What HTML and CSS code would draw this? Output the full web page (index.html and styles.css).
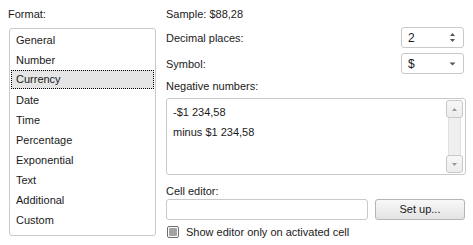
FILE: index.html
```html
<!DOCTYPE html>
<html>
<head>
<meta charset="utf-8">
<link rel="stylesheet" href="styles.css">
</head>
<body>
<div class="dialog">
  <div class="left">
    <div class="label">Format:</div>
    <div class="listbox">
      <div class="item">General</div>
      <div class="item">Number</div>
      <div class="item selected">Currency</div>
      <div class="item">Date</div>
      <div class="item">Time</div>
      <div class="item">Percentage</div>
      <div class="item">Exponential</div>
      <div class="item">Text</div>
      <div class="item">Additional</div>
      <div class="item">Custom</div>
    </div>
  </div>
  <div class="right">
    <div class="label">Sample: $88,28</div>
    <div class="row decimal">
      <span>Decimal places:</span>
      <div class="field spinner">
        <span>2</span>
        <svg class="spin" width="7" height="11" viewBox="0 0 7 11"><path d="M3.5 1 L6 4 H1 Z M1 7 H6 L3.5 10 Z" fill="#555"/></svg>
      </div>
    </div>
    <div class="row symbol">
      <span>Symbol:</span>
      <div class="field select">
        <span>$</span>
        <svg class="drop" width="7" height="4" viewBox="0 0 7 4"><path d="M0.5 0.5 H6.5 L3.5 3.5 Z" fill="#555"/></svg>
      </div>
    </div>
    <div class="label neg">Negative numbers:</div>
    <div class="neglist">
      <div class="negitems">
        <div class="negitem">-$1 234,58</div>
        <div class="negitem">minus $1 234,58</div>
      </div>
      <div class="scrollbar">
        <div class="sbtn"><svg width="5" height="3" viewBox="0 0 5 3"><path d="M2.5 0 L5 3 H0 Z" fill="#999"/></svg></div>
        <div class="track"></div>
        <div class="sbtn"><svg width="5" height="3" viewBox="0 0 5 3"><path d="M0 0 H5 L2.5 3 Z" fill="#999"/></svg></div>
      </div>
    </div>
    <div class="label cell">Cell editor:</div>
    <div class="editrow">
      <div class="field input"></div>
      <div class="button">Set up...</div>
    </div>
    <div class="checkrow">
      <span class="checkbox"><span class="inner"></span></span>
      <span>Show editor only on activated cell</span>
    </div>
  </div>
</div>
</body>
</html>
```
FILE: styles.css
```css
html, body {
  margin: 0;
  padding: 0;
  background: #ffffff;
}
body {
  font-family: "Liberation Sans", Arial, sans-serif;
  font-size: 11px;
  color: #1a1a1a;
  width: 473px;
  height: 245px;
  overflow: hidden;
}
.dialog {
  display: flex;
  padding: 4px 0 0 8px;
  gap: 10px;
}
.left {
  width: 148px;
  display: flex;
  flex-direction: column;
}
.label {
  height: 20px;
  line-height: 20px;
}
.listbox {
  margin: 4px 0 0 1px;
  width: 145px;
  height: 205px;
  border: 1px solid #c9c9c9;
  border-radius: 3px;
  padding: 1px 0 0 0;
}
.item {
  height: 20px;
  line-height: 20px;
  padding-left: 5px;
  margin: 0 1px;
  box-sizing: border-box;
}
.item.selected {
  background: #e5e5e5;
  outline: 1px dotted #000;
  outline-offset: -1px;
  height: 19px;
  line-height: 19px;
  margin-bottom: 1px;
}
.right {
  width: 299px;
  display: flex;
  flex-direction: column;
}
.row {
  display: flex;
  align-items: center;
  justify-content: space-between;
  height: 21px;
}
.decimal { margin-top: 3px; }
.symbol { margin-top: 5px; }
.field {
  box-sizing: border-box;
  border: 1px solid #c9c9c9;
  border-radius: 3px;
  background: #fff;
  height: 21px;
}
.spinner, .select {
  width: 63px;
  margin-right: 1px;
  display: flex;
  align-items: center;
  justify-content: space-between;
  padding: 0 7px 0 6px;
}
.spinner span, .select span {
  font-size: 12px;
}
.neg {
  margin-top: 2px;
}
.neglist {
  margin-top: 2px;
  height: 77px;
  width: 300px;
  box-sizing: border-box;
  border: 1px solid #c9c9c9;
  border-radius: 3px;
  display: flex;
  justify-content: space-between;
}
.negitems {
  padding: 3px 0 0 6px;
}
.negitem {
  height: 20px;
  line-height: 20px;
}
.scrollbar {
  width: 17px;
  margin: 1px 2px 1px 0;
  display: flex;
  flex-direction: column;
}
.sbtn {
  box-sizing: border-box;
  height: 18px;
  border: 1px solid #c9c9c9;
  border-radius: 3px;
  background: linear-gradient(#f7f7f7, #ececec);
  display: flex;
  align-items: center;
  justify-content: center;
}
.track {
  flex: 1;
  margin: 0 2px;
  background: #efefef;
  border-left: 1px solid #e0e0e0;
  border-right: 1px solid #e0e0e0;
}
.cell {
  margin-top: 8px;
  height: 16px;
  line-height: 16px;
}
.editrow {
  display: flex;
  gap: 7px;
  height: 21px;
}
.input {
  width: 202px;
}
.button {
  box-sizing: border-box;
  width: 90px;
  height: 21px;
  border: 1px solid #b5b5b5;
  border-radius: 3px;
  background: linear-gradient(#f8f8f8, #e3e3e3);
  text-align: center;
  line-height: 19px;
}
.checkrow {
  margin-top: 5px;
  display: flex;
  align-items: center;
  gap: 7px;
  height: 13px;
  padding-left: 1px;
}
.checkbox {
  box-sizing: border-box;
  width: 12px;
  height: 12px;
  border: 1px solid #6f6f6f;
  border-radius: 2px;
  background: #fff;
  padding: 1px;
  display: flex;
}
.checkbox .inner {
  flex: 1;
  background: #a3a3a3;
  border-radius: 1px;
}
```
